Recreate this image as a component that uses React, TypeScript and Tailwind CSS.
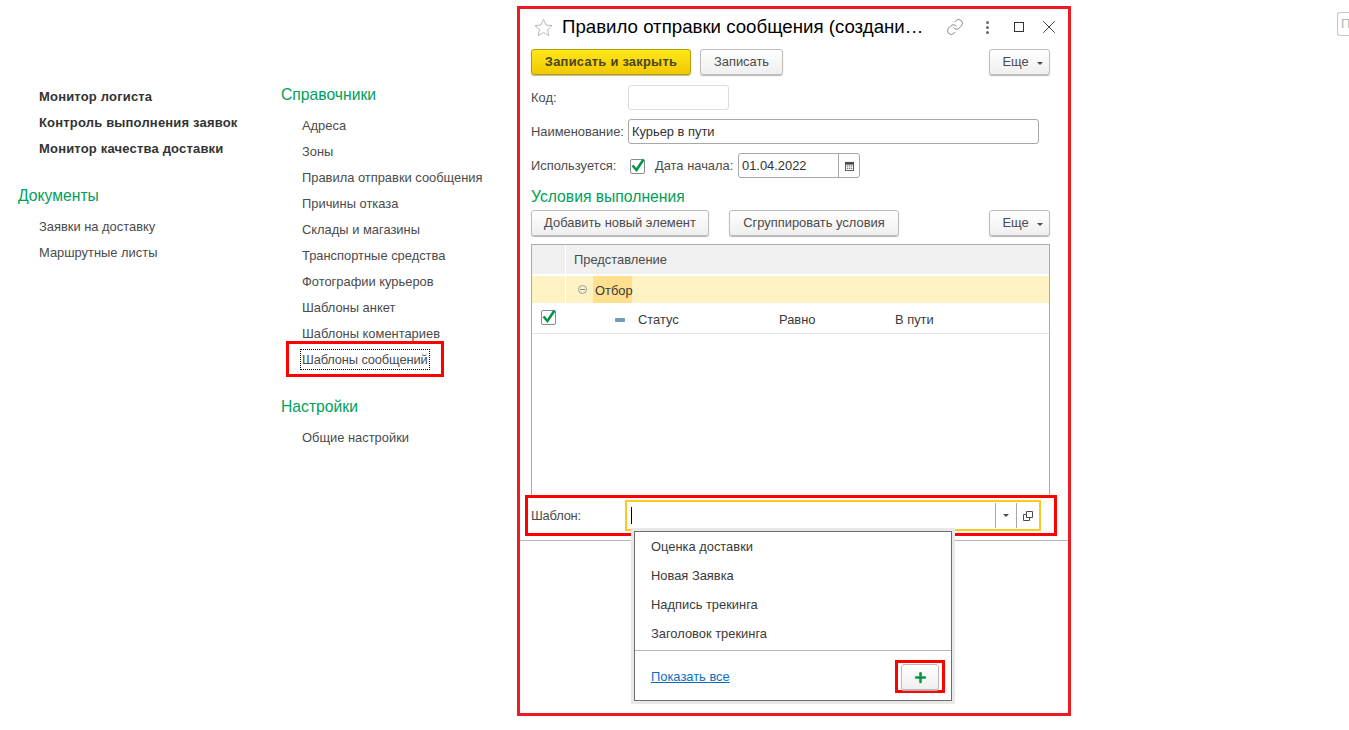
import { Link, Plus, X } from "lucide-react";
import type { ReactNode } from "react";

const docs = ["Заявки на доставку", "Маршрутные листы"];
const monitors = ["Монитор логиста", "Контроль выполнения заявок", "Монитор качества доставки"];
const catalogs = [
  "Адреса",
  "Зоны",
  "Правила отправки сообщения",
  "Причины отказа",
  "Склады и магазины",
  "Транспортные средства",
  "Фотографии курьеров",
  "Шаблоны анкет",
  "Шаблоны коментариев",
];
const templates = ["Оценка доставки", "Новая Заявка", "Надпись трекинга", "Заголовок трекинга"];

const GroupTitle = ({ children }: { children: ReactNode }) => (
  <div className="h-[24px] text-[15.7px] leading-[24px] text-[#00a05a]">{children}</div>
);

const NavItem = ({ children, bold }: { children: ReactNode; bold?: boolean }) => (
  <div className={`h-[26px] leading-[26px] ${bold ? "text-[13px] font-bold tracking-[0.18px] text-[#333333]" : "text-[12.9px] text-[#4b4b4b]"}`}>
    {children}
  </div>
);

const Button = ({ children, primary, className = "" }: { children: ReactNode; primary?: boolean; className?: string }) => (
  <button
    className={`flex h-[26px] items-center justify-center rounded-[3px] border bg-linear-to-b text-[12.9px] shadow-[0_1px_1px_#b5b5b5] ${
      primary
        ? "border-[#b79d00] from-[#ffe81a] to-[#f0c800] font-bold tracking-[0.25px] text-[#4a4520]"
        : "border-[#bdbdbd] from-white to-[#efefef] text-[#4b4b4b]"
    } ${className}`}
  >
    {children}
  </button>
);

const MoreButton = ({ className = "" }: { className?: string }) => (
  <Button className={`w-[61px] pl-[6px] ${className}`}>
    Еще
    <span className="ml-[8px] mt-[2px] h-0 w-0 border-x-[3px] border-t-[3px] border-x-transparent border-t-[#4b4b4b]" />
  </Button>
);

const Check = ({ className = "" }: { className?: string }) => (
  <span className={`relative block h-[15px] w-[15px] rounded-[2px] border border-[#8c8c8c] bg-white ${className}`}>
    <svg viewBox="0 0 16 16" className="absolute -left-[1px] -top-[3px] h-[16px] w-[16px]">
      <path d="M2.5 8.5 6.5 13 13.5 2.5" fill="none" stroke="#009646" strokeWidth="2.6" />
    </svg>
  </span>
);

const CalendarIcon = () => (
  <svg viewBox="0 0 10 11" className="h-[10px] w-[9px]">
    <path d="M0 1h10v10H0z" fill="#4b4b4b" />
    <path d="M1 4h8v6H1z" fill="#ffffff" />
    <path d="M2 5h1.5v1H2zM4.3 5h1.5v1H4.3zM6.6 5h1.5v1H6.6zM2 7.5h1.5v1H2zM4.3 7.5h1.5v1H4.3zM6.6 7.5h1.5v1H6.6z" fill="#4b4b4b" />
  </svg>
);

const Toolbar = () => (
  <div className="mt-[4px] flex pl-[11px]">
    <Button primary className="w-[160px]">
      Записать и закрыть
    </Button>
    <Button className="ml-[9px] w-[83px]">Записать</Button>
    <MoreButton className="ml-[206px]" />
  </div>
);

const ConditionsTable = () => (
  <div className="ml-[11px] mt-[8px] h-[251px] w-[519px] border border-b-0 border-[#aaaaaa] text-[12.9px] text-[#3a3a3a]">
    <div className="flex h-[31px] border-b-2 border-white bg-[#f0f0f0]">
      <div className="w-[34px] border-r border-white" />
      <div className="pl-[8px] leading-[30px] text-[#4b4b4b]">Представление</div>
    </div>
    <div className="flex h-[27px] bg-[#fdf2c4]">
      <div className="w-[34px] border-r border-white" />
      <div className="flex pl-[12px]">
        <span className="mt-[9px] flex h-[9px] w-[9px] items-center justify-center rounded-full border border-[#9a9a9a]">
          <span className="h-[1px] w-[5px] bg-[#8a8a8a]" />
        </span>
        <span className="ml-[6px] w-[39px] bg-[#fee08e] pl-[2px] leading-[29px]">Отбор</span>
      </div>
    </div>
    <div className="mt-[2px] flex h-[29px] items-center border-b border-[#e3e3e3] pt-[1px]">
      <div className="w-[34px] pl-[9px]">
        <Check className="-mt-[4px]" />
      </div>
      <span className="ml-[49px] h-[4px] w-[10px] rounded-[1px] bg-[#6e9cc0]" />
      <span className="ml-[13px] w-[141px]">Статус</span>
      <span className="w-[116px]">Равно</span>
      <span>В пути</span>
    </div>
  </div>
);

const TemplatePopup = () => (
  <div className="absolute left-[114px] top-[522px] h-[170px] w-[318px] border border-[#6e6e6e] bg-white text-[12.9px] text-[#3a3a3a] shadow-[0_0_0_3px_#e8e8e8]">
    <div className="pl-[16px]">
      {templates.map((name) => (
        <div key={name} className="h-[29px] leading-[29px]">
          {name}
        </div>
      ))}
    </div>
    <div className="mt-[2px] h-px bg-[#b5b5b5]" />
    <div className="flex items-center justify-between pl-[16px] pr-[6px] pt-[9px]">
      <a className="text-[#0a6fc2] underline">Показать все</a>
      <div className="w-[50px] flex-none border-[3px] border-[#ff0000] pl-[3px] pt-[1px]">
        <Button className="h-[24px] w-[38px]">
          <Plus size={15} strokeWidth={4} color="#009646" />
        </Button>
      </div>
    </div>
  </div>
);

const RuleWindow = () => (
  <div className="relative mt-[6px] h-[710px] w-[554px] flex-none border-[3px] border-[#ed1c24] bg-white">
    {/* заголовок окна */}
    <div className="flex h-[36px] items-center pl-[14px] text-[#333333]">
      <svg viewBox="0 0 20 20" className="h-[19px] w-[19px]">
        <path d="M10 1.5 12.6 7.4 19 8 14.2 12.2 15.6 18.5 10 15.2 4.4 18.5 5.8 12.2 1 8 7.4 7.4Z" fill="none" stroke="#b5b5b5" />
      </svg>
      <span className="ml-[9px] w-[364px] whitespace-nowrap text-[18.67px] text-black">Правило отправки сообщения (создани…</span>
      <Link size={18} strokeWidth={1} color="#666666" className="ml-[20px]" />
      <span className="ml-[22px] flex flex-col gap-[2px]">
        <i className="h-[3px] w-[3px] rounded-full bg-[#6a6a6a]" />
        <i className="h-[3px] w-[3px] rounded-full bg-[#6a6a6a]" />
        <i className="h-[3px] w-[3px] rounded-full bg-[#6a6a6a]" />
      </span>
      <span className="ml-[25px] h-[10px] w-[10px] border border-[#333333]" />
      <X size={22} strokeWidth={1} color="#333333" className="ml-[14px]" />
    </div>

    <Toolbar />

    <div className="mt-[10px] flex h-[25px] items-center pl-[11px] text-[12.9px] text-[#4b4b4b]">
      <span className="w-[97px]">Код:</span>
      <span className="h-[25px] w-[101px] rounded-[3px] border border-[#dcdcdc]" />
    </div>
    <div className="mt-[9px] flex h-[25px] items-center pl-[11px] text-[12.9px] text-[#4b4b4b]">
      <span className="w-[97px] whitespace-nowrap">Наименование:</span>
      <span className="h-[25px] w-[411px] rounded-[3px] border border-[#a8a8a8] pl-[3px] leading-[23px] text-[#333333]">Курьер в пути</span>
    </div>
    <div className="mt-[9px] flex h-[25px] items-center pl-[11px] text-[12.9px] text-[#4b4b4b]">
      <span className="w-[99px]">Используется:</span>
      <Check className="mt-[2px]" />
      <span className="ml-[10px] w-[83px] whitespace-nowrap">Дата начала:</span>
      <span className="flex h-[25px] w-[122px] rounded-[3px] border border-[#a8a8a8] text-[#333333]">
        <span className="w-[100px] border-r border-[#a8a8a8] pl-[3px] leading-[23px]">01.04.2022</span>
        <span className="flex flex-1 items-center justify-center"><CalendarIcon /></span>
      </span>
    </div>

    <div className="mt-[7px] h-[24px] pl-[11px] text-[15.7px] leading-[24px] text-[#00a05a]">Условия выполнения</div>

    <div className="mt-[1px] flex pl-[11px]">
      <Button className="w-[178px]">Добавить новый элемент</Button>
      <Button className="ml-[20px] w-[170px]">Сгруппировать условия</Button>
      <MoreButton className="ml-[90px]" />
    </div>

    <ConditionsTable />

    {/* поле выбора шаблона */}
    <div className="ml-[5px] flex h-[41px] w-[532px] items-center border-[3px] border-[#ff0000] pl-[3px] text-[12.9px] text-[#4b4b4b]">
      <span className="w-[94px] tracking-[-0.2px]">Шаблон:</span>
      <div className="flex h-[31px] w-[416px] items-center border-2 border-[#fbc81e]">
        <span className="ml-[4px] h-[17px] w-px bg-black" />
        <span className="ml-auto flex h-[25px] w-[21px] items-center justify-center border-l border-[#a8a8a8]">
          <span className="h-0 w-0 border-x-[3px] border-t-[3px] border-x-transparent border-t-[#4b4b4b]" />
        </span>
        <span className="flex h-[25px] w-[23px] items-center justify-center border-l border-[#a8a8a8]">
          <svg viewBox="0 0 10 10" className="h-[10px] w-[10px]">
            <path d="M3.5 .5h6v6h-6zM.5 3.5h3M.5 3.5v6h6v-3" fill="none" stroke="#4b4b4b" />
          </svg>
        </span>
      </div>
    </div>
    <div className="mt-[4px] h-px bg-[#b5b5b5]" />

    <TemplatePopup />
  </div>
);

export default function App() {
  return (
    <div className="relative flex h-[730px] w-[1349px] overflow-hidden bg-white font-['Liberation_Sans',Arial,sans-serif]">
      <div className="w-[281px] flex-none pl-[18px] pt-[84px]">
        <div className="pl-[21px]">
          {monitors.map((name) => (
            <NavItem key={name} bold>
              {name}
            </NavItem>
          ))}
        </div>
        <div className="mt-[22px]">
          <GroupTitle>Документы</GroupTitle>
        </div>
        <div className="mt-[6px] pl-[21px]">
          {docs.map((name) => (
            <NavItem key={name}>{name}</NavItem>
          ))}
        </div>
      </div>

      <div className="w-[236px] flex-none pt-[83px]">
        <GroupTitle>Справочники</GroupTitle>
        <div className="mt-[6px] pl-[21px]">
          {catalogs.map((name) => (
            <NavItem key={name}>{name}</NavItem>
          ))}
          <div className="relative">
            <NavItem>
              <span className="-ml-[1px] px-[1px] py-[2px] tracking-[-0.15px] outline-1 outline-black outline-dotted">Шаблоны сообщений</span>
            </NavItem>
            <span className="absolute -left-[16px] -top-[6px] h-[36px] w-[158px] border-[3px] border-[#ff0000]" />
          </div>
        </div>
        <div className="mt-[22px]">
          <GroupTitle>Настройки</GroupTitle>
        </div>
        <div className="mt-[6px] pl-[21px]">
          <NavItem>Общие настройки</NavItem>
        </div>
      </div>

      <RuleWindow />

      <div className="ml-[266px] mt-[12px] h-[24px] w-[20px] flex-none rounded-l-[3px] border border-r-0 border-[#c8c8c8] pl-[3px] text-[13px] leading-[22px] text-[#b5b5b5]">
        П
      </div>
    </div>
  );
}
